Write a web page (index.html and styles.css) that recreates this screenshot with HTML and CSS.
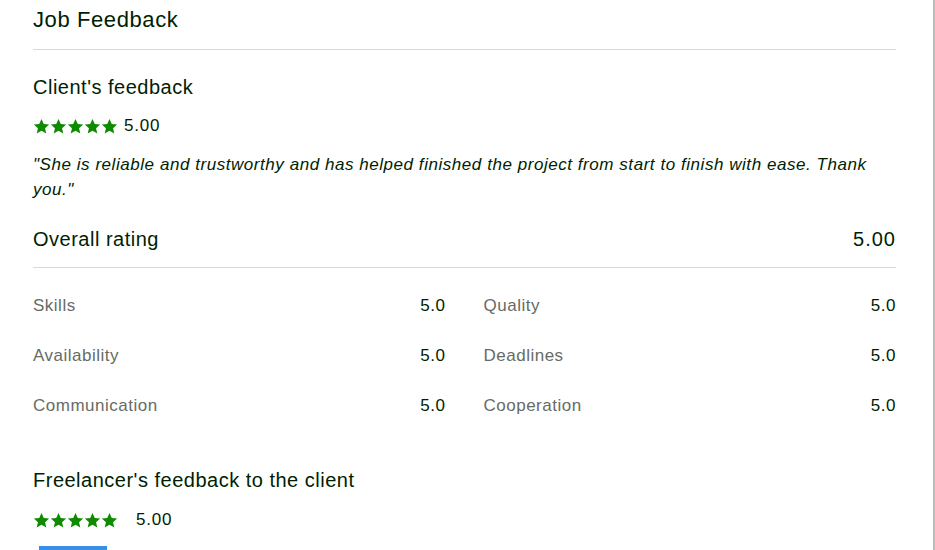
FILE: index.html
```html
<!DOCTYPE html>
<html lang="en">
<head>
<meta charset="utf-8">
<title>Job Feedback</title>
<link rel="stylesheet" href="styles.css">
</head>
<body>
<div class="window">
  <main class="page">
    <header class="title-bar">
      <h1 class="title">Job Feedback</h1>
    </header>

    <h2 class="section-title first">Client's feedback</h2>
    <div class="rating-row">
      <span class="stars">
        <svg viewBox="0 0 24 24"><path d="M12 1.5l3.2 7 7.6.7-5.8 5.1 1.8 7.5L12 17.9l-6.8 3.9 1.8-7.5-5.8-5.1 7.6-.7z"/></svg>
        <svg viewBox="0 0 24 24"><path d="M12 1.5l3.2 7 7.6.7-5.8 5.1 1.8 7.5L12 17.9l-6.8 3.9 1.8-7.5-5.8-5.1 7.6-.7z"/></svg>
        <svg viewBox="0 0 24 24"><path d="M12 1.5l3.2 7 7.6.7-5.8 5.1 1.8 7.5L12 17.9l-6.8 3.9 1.8-7.5-5.8-5.1 7.6-.7z"/></svg>
        <svg viewBox="0 0 24 24"><path d="M12 1.5l3.2 7 7.6.7-5.8 5.1 1.8 7.5L12 17.9l-6.8 3.9 1.8-7.5-5.8-5.1 7.6-.7z"/></svg>
        <svg viewBox="0 0 24 24"><path d="M12 1.5l3.2 7 7.6.7-5.8 5.1 1.8 7.5L12 17.9l-6.8 3.9 1.8-7.5-5.8-5.1 7.6-.7z"/></svg>
      </span>
      <span class="score">5.00</span>
    </div>
    <p class="quote">"She is reliable and trustworthy and has helped finished the project from start to finish with ease. Thank you."</p>

    <div class="overall">
      <h2 class="section-title">Overall rating</h2>
      <span class="overall-score">5.00</span>
    </div>

    <div class="breakdown">
      <div class="metric"><span class="label">Skills</span><span class="value">5.0</span></div>
      <div class="metric"><span class="label">Quality</span><span class="value">5.0</span></div>
      <div class="metric"><span class="label">Availability</span><span class="value">5.0</span></div>
      <div class="metric"><span class="label">Deadlines</span><span class="value">5.0</span></div>
      <div class="metric"><span class="label">Communication</span><span class="value">5.0</span></div>
      <div class="metric"><span class="label">Cooperation</span><span class="value">5.0</span></div>
    </div>

    <h2 class="section-title freelancer">Freelancer's feedback to the client</h2>
    <div class="rating-row second">
      <span class="stars">
        <svg viewBox="0 0 24 24"><path d="M12 1.5l3.2 7 7.6.7-5.8 5.1 1.8 7.5L12 17.9l-6.8 3.9 1.8-7.5-5.8-5.1 7.6-.7z"/></svg>
        <svg viewBox="0 0 24 24"><path d="M12 1.5l3.2 7 7.6.7-5.8 5.1 1.8 7.5L12 17.9l-6.8 3.9 1.8-7.5-5.8-5.1 7.6-.7z"/></svg>
        <svg viewBox="0 0 24 24"><path d="M12 1.5l3.2 7 7.6.7-5.8 5.1 1.8 7.5L12 17.9l-6.8 3.9 1.8-7.5-5.8-5.1 7.6-.7z"/></svg>
        <svg viewBox="0 0 24 24"><path d="M12 1.5l3.2 7 7.6.7-5.8 5.1 1.8 7.5L12 17.9l-6.8 3.9 1.8-7.5-5.8-5.1 7.6-.7z"/></svg>
        <svg viewBox="0 0 24 24"><path d="M12 1.5l3.2 7 7.6.7-5.8 5.1 1.8 7.5L12 17.9l-6.8 3.9 1.8-7.5-5.8-5.1 7.6-.7z"/></svg>
      </span>
      <span class="score wide">5.00</span>
    </div>
    <div class="tab-indicator"></div>
  </main>
  <div class="edge"></div>
</div>
</body>
</html>
```

FILE: styles.css
```css
* { box-sizing: border-box; }

html, body {
  margin: 0;
  padding: 0;
  background: #ffffff;
  overflow: hidden;
}

body {
  font-family: "Liberation Sans", Arial, sans-serif;
  color: #001e00;
}

.window {
  display: flex;
  height: 550px;
}

.page {
  flex: 1;
  padding: 0 37px 0 33px;
}

.edge {
  width: 2px;
  background: #b7bdb7;
}

.title-bar {
  padding: 5px 0 14px;
  border-bottom: 1px solid #d9d9d9;
}

.title {
  margin: 0;
  font-size: 22px;
  line-height: 30px;
  font-weight: 400;
  letter-spacing: 0.6px;
}

.section-title {
  margin: 0;
  font-size: 20px;
  line-height: 28px;
  font-weight: 400;
  letter-spacing: 0.5px;
}

.section-title.first { margin-top: 23px; }
.section-title.freelancer { margin-top: 35px; }

.rating-row {
  display: flex;
  align-items: center;
  height: 20px;
  margin-top: 15px;
}

.rating-row.second { margin-top: 16px; }

.stars {
  display: flex;
  fill: #108a00;
}

.stars svg {
  width: 17px;
  height: 17px;
  display: block;
}

.score {
  margin-left: 6px;
  font-size: 17px;
  letter-spacing: 0.8px;
}

.score.wide { margin-left: 18px; }

.quote {
  margin: 16px 0 0;
  font-size: 17px;
  line-height: 25px;
  font-style: italic;
  letter-spacing: 0.55px;
}

.overall {
  display: flex;
  justify-content: space-between;
  align-items: center;
  margin-top: 23px;
  padding-bottom: 14px;
  border-bottom: 1px solid #d9d9d9;
}

.overall-score {
  font-size: 20px;
  line-height: 28px;
  letter-spacing: 1px;
}

.breakdown {
  display: grid;
  grid-template-columns: 1fr 1fr;
  column-gap: 38px;
  margin-top: 13px;
}

.metric {
  display: flex;
  justify-content: space-between;
  align-items: center;
  height: 50px;
  font-size: 17px;
  letter-spacing: 0.5px;
}

.label { color: #676b66; }
.value { color: #001e00; }

.tab-indicator {
  width: 68px;
  height: 4px;
  margin: 16px 0 0 6px;
  background: #3b8ee8;
}
```
